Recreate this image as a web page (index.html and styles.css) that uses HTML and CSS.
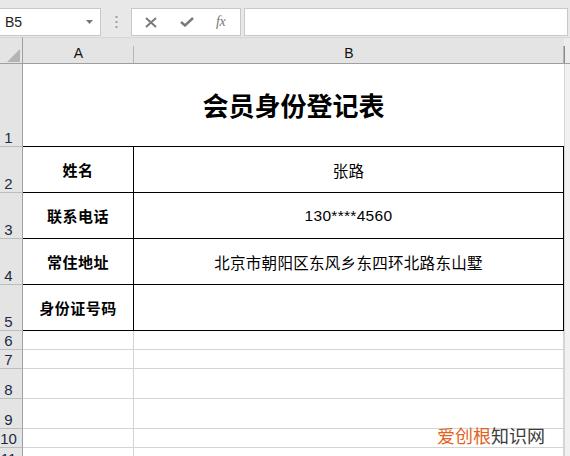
FILE: index.html
```html
<!DOCTYPE html>
<html lang="zh-CN">
<head>
<meta charset="utf-8">
<title>会员身份登记表</title>
<link rel="stylesheet" href="styles.css">
</head>
<body>
<div class="toolbar">
  <div class="namebox">
    <span class="name">B5</span>
    <svg class="caret" width="7" height="4" viewBox="0 0 7 4"><path d="M0 0H7L3.5 4Z" fill="#777"/></svg>
  </div>
  <div class="sep">
    <svg width="3" height="12" viewBox="0 0 3 12"><rect x="0.5" y="0" width="2" height="2" fill="#a0a0a0"/><rect x="0.5" y="5" width="2" height="2" fill="#a0a0a0"/><rect x="0.5" y="10" width="2" height="2" fill="#a0a0a0"/></svg>
  </div>
  <div class="fnbox">
    <svg class="ico" width="12" height="11" viewBox="0 0 12 11"><path d="M1 1L11 10M11 1L1 10" stroke="#7a7a7a" stroke-width="2" fill="none"/></svg>
    <svg class="ico" width="14" height="10" viewBox="0 0 14 10"><path d="M1 5L5 8.5L13 1" stroke="#7a7a7a" stroke-width="2.4" fill="none"/></svg>
    <span class="fx">fx</span>
  </div>
  <div class="formula"></div>
</div>

<div class="sheet">
  <div class="corner"><svg width="13" height="13" viewBox="0 0 13 13"><path d="M13 0V13H0Z" fill="#b4b4b4"/></svg></div>
  <div class="colhead">A</div>
  <div class="colhead">B</div>
  <div class="strip head"></div>

  <div class="rowhead">1</div>
  <div class="title">会员身份登记表</div>
  <div class="strip"></div>

  <div class="rowhead">2</div>
  <div class="cell label">姓名</div>
  <div class="cell value">张路</div>
  <div class="strip"></div>

  <div class="rowhead">3</div>
  <div class="cell label">联系电话</div>
  <div class="cell value">130****4560</div>
  <div class="strip"></div>

  <div class="rowhead">4</div>
  <div class="cell label">常住地址</div>
  <div class="cell value">北京市朝阳区东风乡东四环北路东山墅</div>
  <div class="strip"></div>

  <div class="rowhead">5</div>
  <div class="cell label">身份证号码</div>
  <div class="cell value"></div>
  <div class="strip"></div>

  <div class="rowhead">6</div><div class="grid"></div><div class="grid"></div><div class="strip"></div>
  <div class="rowhead">7</div><div class="grid"></div><div class="grid"></div><div class="strip"></div>
  <div class="rowhead">8</div><div class="grid"></div><div class="grid"></div><div class="strip"></div>
  <div class="rowhead">9</div><div class="grid"></div><div class="grid"></div><div class="strip"></div>
  <div class="rowhead">10</div><div class="grid"></div><div class="grid"></div><div class="strip"></div>
  <div class="rowhead">11</div><div class="grid"></div><div class="grid"></div><div class="strip"></div>
</div>

<div class="watermark"><span class="wm-a">爱创根</span><span class="wm-b">知识网</span></div>
</body>
</html>
```

FILE: styles.css
```css
* { box-sizing: border-box; }
html, body {
  margin: 0;
  padding: 0;
  width: 570px;
  height: 456px;
  overflow: hidden;
  background: #ffffff;
  font-family: "Liberation Sans", "Noto Sans CJK SC", sans-serif;
  color: #111;
}

.toolbar {
  height: 37px;
  background: #e8e8e8;
  display: flex;
  align-items: flex-start;
  padding-top: 8px;
}
.namebox {
  width: 101px;
  height: 28px;
  background: #fff;
  border: 1px solid #c8c8c8;
  border-left: none;
  display: flex;
  align-items: center;
  justify-content: space-between;
  padding: 0 7px 0 5px;
}
.name { font-size: 14px; color: #222; }
.caret { margin-top: -1px; }
.sep {
  width: 30px;
  height: 28px;
  display: flex;
  align-items: center;
  justify-content: center;
}
.fnbox {
  width: 110px;
  height: 28px;
  background: #fff;
  border: 1px solid #c8c8c8;
  display: flex;
  align-items: center;
  padding-left: 13px;
}
.fnbox .ico:first-child { margin-right: 23px; }
.fnbox .ico:nth-child(2) { margin-right: 22px; }
.fx {
  font-family: "Liberation Serif", serif;
  font-style: italic;
  font-size: 14px;
  color: #777;
  letter-spacing: -0.5px;
}
.formula {
  margin-left: 3px;
  width: 324px;
  height: 28px;
  background: #fff;
  border: 1px solid #c8c8c8;
}

.sheet {
  display: grid;
  grid-template-columns: 23px 111px 430px 6px;
  grid-template-rows: 27px 83px 46px 46px 46px 46px 19px 19px 30px 30px 19px 20px;
  height: 419px;
}

.corner {
  background: #e4e4e4;
  border-bottom: 1px solid #9f9f9f;
  border-right: 1px solid #9f9f9f;
  border-top: 1px solid #d6d6d6;
  display: flex;
  align-items: flex-end;
  justify-content: flex-end;
  padding: 0 1px 1px 0;
}
.corner svg { margin-right: 1px; }
.colhead {
  background: linear-gradient(#b6b6b6, #b6b6b6) right bottom / 1px 17px no-repeat, #e4e4e4;
  border-top: 1px solid #d6d6d6;
  border-bottom: 1px solid #9f9f9f;
  display: flex;
  align-items: flex-end;
  justify-content: center;
  font-size: 14px;
  line-height: 16px;
  padding-bottom: 2px;
  color: #111;
}
.strip {
  background: #f1f1f1;
  border-left: 1px solid #d6d6d6;
}
.strip.head {
  background: linear-gradient(#8a8a8a, #8a8a8a) left bottom / 1px 17px no-repeat, #ececec;
  border-left: none;
  border-top: 1px solid #d6d6d6;
  border-bottom: 1px solid #9f9f9f;
}

.rowhead {
  background: #e4e4e4;
  border-right: 1px solid #9f9f9f;
  border-bottom: 1px solid #bdbdbd;
  display: flex;
  align-items: flex-end;
  justify-content: center;
  padding-right: 5px;
  font-size: 15px;
  line-height: 17px;
  color: #1c2a44;
  padding-bottom: 0;
  overflow: hidden;
}

.title {
  grid-column: span 2;
  border-bottom: 1px solid #000;
  display: flex;
  align-items: center;
  justify-content: center;
  font-family: "Noto Sans CJK SC", sans-serif;
  font-weight: 700;
  font-size: 26px;
  color: #000;
  padding-bottom: 2px;
}

.cell {
  border-right: 1px solid #000;
  border-bottom: 1px solid #000;
  display: flex;
  align-items: center;
  justify-content: center;
  color: #000;
}
.label {
  font-family: "Noto Sans CJK SC", sans-serif;
  font-weight: 700;
  font-size: 15px;
  letter-spacing: 0.5px;
}
.value {
  font-family: "Liberation Sans", "Noto Sans CJK SC", sans-serif;
  font-size: 15.5px;
  letter-spacing: 0.3px;
}

.grid {
  border-right: 1px solid #d4d4d4;
  border-bottom: 1px solid #d4d4d4;
}

.watermark {
  position: absolute;
  left: 437px;
  top: 424px;
  font-family: "Noto Sans CJK SC", sans-serif;
  font-size: 18px;
  line-height: 22px;
  white-space: nowrap;
}
.wm-a { color: #e2631f; }
.wm-b { color: #3c3c3c; }
```
